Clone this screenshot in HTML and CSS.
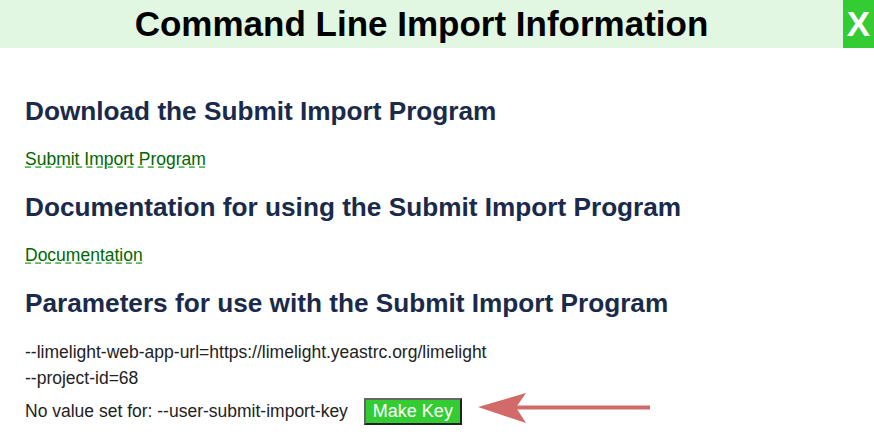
FILE: index.html
```html
<!DOCTYPE html>
<html>
<head>
<meta charset="utf-8">
<link rel="stylesheet" href="styles.css">
</head>
<body>
<div class="header">
  <div class="title">Command Line Import Information</div>
  <div class="close">X</div>
</div>
<div class="content">
  <h2 class="heading">Download the Submit Import Program</h2>
  <div class="linkrow"><a class="link" href="#">Submit Import Program</a></div>
  <h2 class="heading">Documentation for using the Submit Import Program</h2>
  <div class="linkrow"><a class="link" href="#">Documentation</a></div>
  <h2 class="heading">Parameters for use with the Submit Import Program</h2>
  <div class="params">
    <div class="param">--limelight-web-app-url=https://limelight.yeastrc.org/limelight</div>
    <div class="param">--project-id=68</div>
    <div class="param keyrow">
      <span>No value set for: --user-submit-import-key</span>
      <button class="makekey">Make Key</button>
      <svg class="arrow" width="174" height="32" viewBox="0 0 174 32">
        <path d="M0 14 L48 0 L38 14.5 L48 30 Z" fill="#d26a6a"/>
        <rect x="36" y="12.5" width="136" height="4" fill="#d26a6a"/>
      </svg>
    </div>
  </div>
</div>
</body>
</html>
```
FILE: styles.css
```css
html, body {
  margin: 0;
  padding: 0;
  background: #ffffff;
  font-family: "Liberation Sans", Arial, sans-serif;
}
.header {
  display: flex;
  height: 48px;
  background: #e2f7e2;
}
.title {
  flex: 1;
  text-align: center;
  font-weight: bold;
  font-size: 35px;
  line-height: 48px;
  color: #000;
}
.close {
  width: 31px;
  background: #33cc33;
  color: #fff;
  font-weight: bold;
  font-size: 35px;
  line-height: 48px;
  text-align: center;
}
.content {
  padding: 48px 25px 0 25px;
}
.heading {
  margin: 0;
  font-size: 26.2px;
  line-height: 30px;
  color: #1a2a4a;
  font-weight: bold;
}
.linkrow {
  margin: 23px 0 23px 0;
  font-size: 17.5px;
  line-height: 20px;
}
.link {
  color: #006600;
  text-decoration: underline dashed #5cb85c;
  text-underline-offset: 2px;
}
.params {
  margin-top: 21px;
  font-size: 17.5px;
  color: #222;
}
.param {
  line-height: 26px;
}
.keyrow {
  display: flex;
  align-items: center;
  margin-top: 4px;
  line-height: 29px;
}
.makekey {
  margin-left: 16px;
  background: #33cc33;
  color: #fff;
  font-family: "Liberation Sans", Arial, sans-serif;
  font-size: 18px;
  height: 27px;
  width: 98px;
  padding: 0;
  border: 2px solid;
  border-color: #666 #222 #222 #666;
}
.arrow {
  margin-left: 16px;
  display: block;
  position: relative;
  top: -2px;
}
```
